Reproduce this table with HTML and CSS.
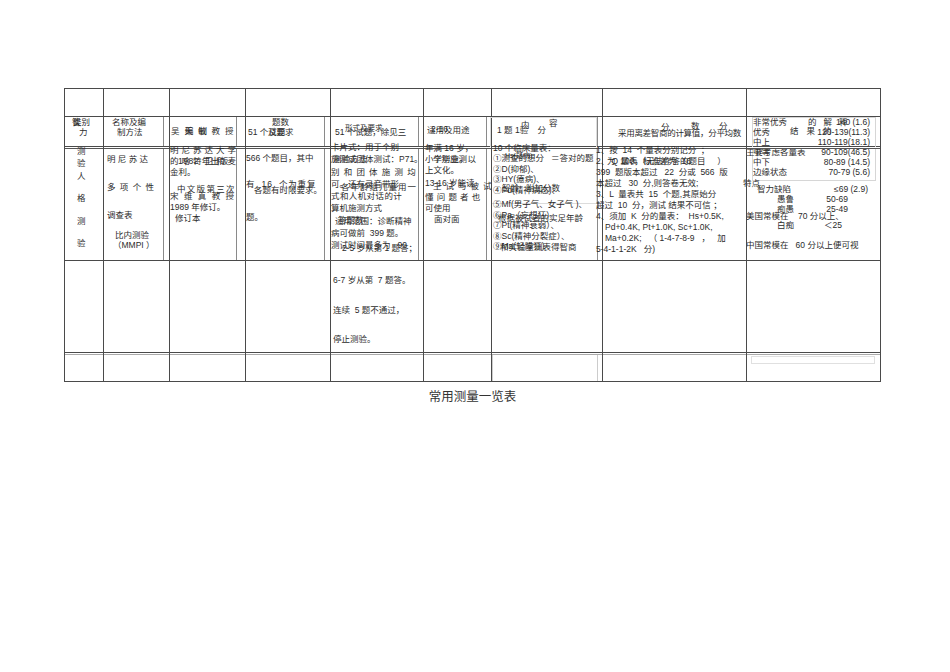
FILE: index.html
```html
<!DOCTYPE html>
<html lang="zh">
<head>
<meta charset="utf-8">
<title>常用测量一览表</title>
<link rel="stylesheet" href="styles.css">
</head>
<body>
<div class="page">
<div class="tbl">
<div class="c"></div><div class="c"></div><div class="c"></div><div class="c"></div><div class="c"></div><div class="c"></div><div class="c"></div><div class="c"></div><div class="c"></div>

<div class="c">
 <div class="m h1a"><div>类别</div><div class="h1a2">力</div></div>
 <div class="h1b">智</div>
</div>
<div class="c in5">
 <div class="m h2a"><div>名称及编</div><div class="h2a2">制方法</div></div>
</div>
<div class="c in8">
 <div class="h3a">吴天敏教授</div>
 <div class="h3b">编制</div>
</div>
<div class="c in5">
 <div class="m h4a"><div class="h4t">题数</div><div class="h4n">51 个试题</div></div>
 <div class="h4b">及要求</div>
</div>
<div class="c in4">
 <div class="h5a">51 个试题，除见三</div>
 <div class="h5b">形式及要求</div>
</div>
<div class="c in4">
 <div class="h6a">适用及用途</div>
 <div class="h6b">2-16</div>
</div>
<div class="c in4">
 <div class="h7box"></div>
 <div class="h7a">1 题 1验    分</div>
 <div class="h7b">内</div>
 <div class="h7c">容</div>
</div>
<div class="c">
 <div class="h8a">采用离差智商的计算值，分平均数</div>
 <div class="h8b">分</div>
 <div class="h8c">数</div>
 <div class="h8d">分</div>
</div>
<div class="c">
 <div class="h9box"></div>
 <div class="m h9list">
  <div class="row"><span>非常优秀</span><span>140 (1.6)</span></div>
  <div class="row"><span>优秀</span><span>120-139(11.3)</span></div>
  <div class="row"><span>中上</span><span>110-119(18.1)</span></div>
  <div class="row"><span>中等</span><span>90-109(46.5)</span></div>
  <div class="row"><span>中下</span><span>80-89 (14.5)</span></div>
  <div class="row"><span>边缘状态</span><span>70-79 (5.6)</span></div>
  <div class="row g7"><span class="li4">智力缺陷</span><span class="vr2">≤69 (2.9)</span></div>
  <div class="row"><span class="li24">愚鲁</span><span class="vr22">50-69</span></div>
  <div class="row"><span class="li24">痴愚</span><span class="vr22">25-49</span></div>
  <div class="row g10"><span class="li24">白痴</span><span class="vr28">＜25</span></div>
 </div>
 <div class="h9o1">的解释</div>
 <div class="h9o2">结果的</div>
 <div class="h9o3">主要考虑各量表</div>
 <div class="h9o4">特点</div>
 <div class="h9o5">美国常模在    70 分以上、</div>
 <div class="h9o6">中国常模在   60 分以上便可视</div>
</div>

<div class="c b">
 <div class="m b1"><div>测</div><div class="v2">验</div><div class="v3">人</div><div class="v12">格</div><div class="v13">测</div><div class="v12">验</div></div>
</div>
<div class="c b in5">
 <div class="m b2"><div class="b2l1">明 尼 苏 达</div><div class="b2l2">多 项 个 性</div><div class="b2l3">调查表</div><div class="b2l4">比内测验</div><div class="b2l5">（MMPI ）</div></div>
</div>
<div class="c b in8">
 <div class="m b3a"><div class="ls3">明尼苏达大学</div><div class="ls3">的哈特卫和麦</div><div>金利。</div><div class="b3song">宋维真教授</div><div>1989 年修订。</div><div class="b3x">修订本</div></div>
 <div class="b3b">1982 年出版</div>
 <div class="b3c">中文版第三次</div>
</div>
<div class="c b in5">
 <div class="m b4a"><div>566 个题目，其中</div><div class="b4l2">有  16  个为重复</div><div class="b4l3">题。</div></div>
 <div class="b4b">各题有时限要求。</div>
</div>
<div class="c b in4">
 <div class="m b5a"><div>卡片式：用于个别</div><div>施测或团体测试：P71。</div><div class="ls42">别和团体施测均</div><div>可。还有录音带形</div><div class="ls04">式和人机对话的计</div><div>算机施测方式</div><div class="b5i">适用范围：诊断精神</div><div>病可做前  399 题。</div><div>测试时间最多为   90</div></div>
 <div class="b5b">测验方法</div>
 <div class="b5c">各年龄组儿童用一</div>
 <div class="b5d">答题数</div>
 <div class="b5e">2-5 岁从第 1 题答；</div>
</div>
<div class="c b in4">
 <div class="m b6a"><div>年满 16 岁，</div><div>小学毕业，以</div><div>上文化。</div><div class="b6l4">主试与被试</div><div class="ls32">懂问题者也</div><div>可使用</div><div class="b6l7">面对面</div></div>
 <div class="b6b">个别施测</div>
 <div class="b6c">13-16 岁能读</div>
</div>
<div class="c b in4">
 <div class="m b7a"><div>10 个临床量表：</div><div>①测查的想分   ＝答对的题</div><div>②D(抑郁)、</div><div>③HY(癔病)、</div><div>④Pd(精神病态)、</div><div class="b7l6">⑤Mf(男子气、女子气 )、</div><div>⑥Pa（妄想狂）</div><div>⑦Pt(精神衰弱）、</div><div>⑧Sc(精神分裂症）、</div><div>⑨Ma(轻躁狂)</div></div>
 <div class="b7b">Hs(疑病)</div>
 <div class="b7c">智龄   附加分数</div>
 <div class="b7d">根据被试者的实足年龄</div>
 <div class="b7e">和实验室测表得智商</div>
</div>
<div class="c b">
 <div class="m b8a"><div>1、按  14  个量表分别记分  ；</div><div>2、 Q 量表（无法作答的题目     ）</div><div>399  题版本超过   22  分或  566  版</div><div>本超过   30  分,则答卷无效;</div><div>3、L  量表共  15  个题,其原始分</div><div>超过  10  分，测试 结果不可信 ；</div><div>4、须加  K  分的量表：  Hs+0.5K,</div><div class="b8i">Pd+0.4K, Pt+1.0K, Sc+1.0K,</div><div class="b8i">Ma+0.2K;   （ 1-4-7-8-9   ，   加</div><div>5-4-1-1-2K   分)</div></div>
 <div class="b8b">为  100，标准差为  16</div>
</div>
<div class="c b"></div>

<div class="c"></div><div class="c"></div><div class="c"></div><div class="c"></div>
<div class="c">
 <div class="m r4"><div>6-7 岁从第  7 题答。</div><div class="r4l2">连续  5 题不通过，</div><div class="r4l3">停止测验。</div></div>
</div>
<div class="c"></div><div class="c"></div><div class="c"></div><div class="c"></div>

<div class="c r5"></div><div class="c r5"></div><div class="c r5"></div><div class="c r5"></div><div class="c r5"></div><div class="c r5"></div><div class="c r5 r5c7"></div><div class="c r5"></div>
<div class="c r5"><div class="r5box"></div></div>
</div>
<div class="cap">常用测量一览表</div>
</div>
</body>
</html>
```
FILE: styles.css
```css
*{box-sizing:border-box;margin:0;padding:0}
html,body{background:#fff}
body{width:950px;height:672px;overflow:hidden;font-family:"Liberation Sans","Noto Sans CJK SC",sans-serif;font-size:8.5px;color:#2b2b2b}
.page{padding:88px 0 0 64px}
.tbl{display:grid;width:817px;grid-template-columns:39px 66px 76px 85px 93px 68px 111px 144px 134px;grid-template-rows:28px 30px 114px 92px 29px;border-left:1px solid #4a4a4a;border-top:1px solid #4a4a4a}
.c{--t1:0 0 0 transparent;--t2:0 0 0 transparent;--r1:0 0 0 transparent;--r2:0 0 0 transparent;--l1:0 0 0 transparent;
  border-right:1px solid #4a4a4a;border-bottom:1px solid #4a4a4a;display:grid;grid-template-columns:100%;grid-template-rows:100%;
  box-shadow:var(--t1),var(--t2),var(--l1),var(--r1),var(--r2);min-width:0;min-height:0}
.c>*{grid-area:1/1;align-self:start;justify-self:start;white-space:pre;line-height:11px}
.c>.m{white-space:nowrap}
.m>div{white-space:pre}
.b{--t1:inset 0 1px 0 #fff;--t2:inset 0 2px 0 #555}
.in5{--r1:inset -5px 0 0 #fff;--r2:inset -6px 0 0 #8a8a8a}
.in8{--r1:inset -8px 0 0 #fff;--r2:inset -9px 0 0 #8a8a8a}
.in4{--r1:inset -4px 0 0 #fff;--r2:inset -5px 0 0 #8a8a8a}
.r5{--t1:inset 0 1px 0 #fff;--t2:inset 0 2px 0 #aaa}
.r5c7{--l1:inset 1px 0 0 #ccc;--r1:inset -4px 0 0 #fff;--r2:inset -5px 0 0 #ccc}
.r5box{margin:3px 0 0 4px;width:124px;height:8px;border:1px solid #e0e0e0}

/* header row */
.h1a{line-height:10px;margin-left:8px}
.c>.h1a{line-height:10px}
.h1a2{padding-left:6px}
.h1b{margin-left:7px}
.c>.h1b{line-height:10px}
.c>.h2a{line-height:10px;margin-left:8px}
.h2a2{padding-left:5px}
.h3a{margin:9px 0 0 1px;letter-spacing:5px}
.h3b{margin:9px 0 0 15px;letter-spacing:5px}
.c>.h4a{line-height:10px}
.h4t{padding-left:26px}
.h4n{padding-left:2px}
.h4b{margin:10px 0 0 22px}
.h5a{margin:10px 0 0 4px}
.h5b{margin:6px 0 0 14px;font-size:7.5px}
.h6a{margin:8px 0 0 3px}
.h6b{margin:7px 0 0 7px}
.h7box{margin-left:-2px;width:107px;height:87px;border:1px solid #dcdcdc}
.h7a{margin:8px 0 0 5px}
.h7b{margin:3px 0 0 29px}
.h7c{margin:1px 0 0 57px}
.h8a{margin:11px 0 0 15px;letter-spacing:-0.3px}
.h8b{margin:5px 0 0 58px}
.h8c{margin:4px 0 0 88px}
.h8d{margin:4px 0 0 116px}
.h9box{margin-left:5px;width:124px;height:64px;border:1px solid #d6d6d6}
.c>.h9list{margin-left:6px;width:117px;line-height:10px}
.row{display:flex;justify-content:space-between;height:10px}
.row span{white-space:nowrap}
.g7{margin-top:6.5px}
.g10{margin-top:6px}
.li4{padding-left:4px}
.li24{padding-left:24px}
.vr2{margin-right:2px}
.vr22{margin-right:22px}
.vr28{margin-right:28px}
.h9o1{margin:0 0 0 61px;letter-spacing:7px}
.h9o2{margin:9px 0 0 43px;letter-spacing:8px}
.h9o3{margin:29.5px 0 0 -1px}
.h9o4{margin:60.5px 0 0 -4px}
.h9o5{margin:93.5px 0 0 -1px}
.h9o6{margin:122.5px 0 0 -1px}

/* body row */
.c>.b1{line-height:10px;margin:-1px 0 0 12px}
.v2{margin-top:2px}
.v3{margin-top:3px}
.v12{margin-top:12px}
.v13{margin-top:13px}
.c>.b2{line-height:10px;margin-left:3px}
.b2l1{margin-top:7px}
.b2l2{margin-top:18px;letter-spacing:1px}
.b2l3{margin-top:18px}
.b2l4{margin-top:10px;padding-left:8px}
.b2l5{padding-left:6px}
.b3a{margin-top:-2.5px}
.ls3{letter-spacing:3px}
.b3song{margin-top:13px;letter-spacing:5.4px}
.b3x{padding-left:5px}
.b3b{margin:8.5px 0 0 8px;letter-spacing:0.5px}
.b3c{margin:36.5px 0 0 7px;letter-spacing:1.3px}
.b4a{margin-top:5.5px}
.b4l2{margin-top:15px;letter-spacing:0.8px}
.b4l3{margin-top:22px}
.b4b{margin:37.5px 0 0 8px}
.c>.b5a{line-height:12.3px;margin-top:-6px}
.ls42{letter-spacing:4.2px}
.ls04{letter-spacing:0.4px}
.b5i{padding-left:4px}
.b5b{margin:7px 0 0 2px}
.b5c{margin:34.5px 0 0 10px;letter-spacing:1px}
.b5d{margin:68px 0 0 7px}
.b5e{margin:95.5px 0 0 11px}
.b6a{margin:-4.5px 0 0 1px}
.b6l4{margin-top:5.5px;padding-left:8px;letter-spacing:4px}
.ls32{letter-spacing:3.2px}
.b6l7{padding-left:9px}
.b6b{margin:6.5px 0 0 9px}
.b6c{margin:31px 0 0 1px}
.c>.b7a{line-height:10.5px;margin:-4.25px 0 0 1px}
.b7l6{margin-top:4px}
.b7b{margin:3px 0 0 13px;font-size:7px}
.b7c{margin:36px 0 0 10px}
.b7d{margin:65.5px 0 0 6px}
.b7e{margin:94.5px 0 0 8px}
.b8a{margin:-2.5px 0 0 -7px}
.b8i{padding-left:9px}
.b8b{margin:8.5px 0 0 4px}

/* row 4 */
.r4{margin:13.5px 0 0 2px}
.r4l2{margin-top:19px}
.r4l3{margin-top:18px}

.cap{width:817px;text-align:center;margin-top:7px;font-size:12.5px;line-height:16px;color:#333}
```
